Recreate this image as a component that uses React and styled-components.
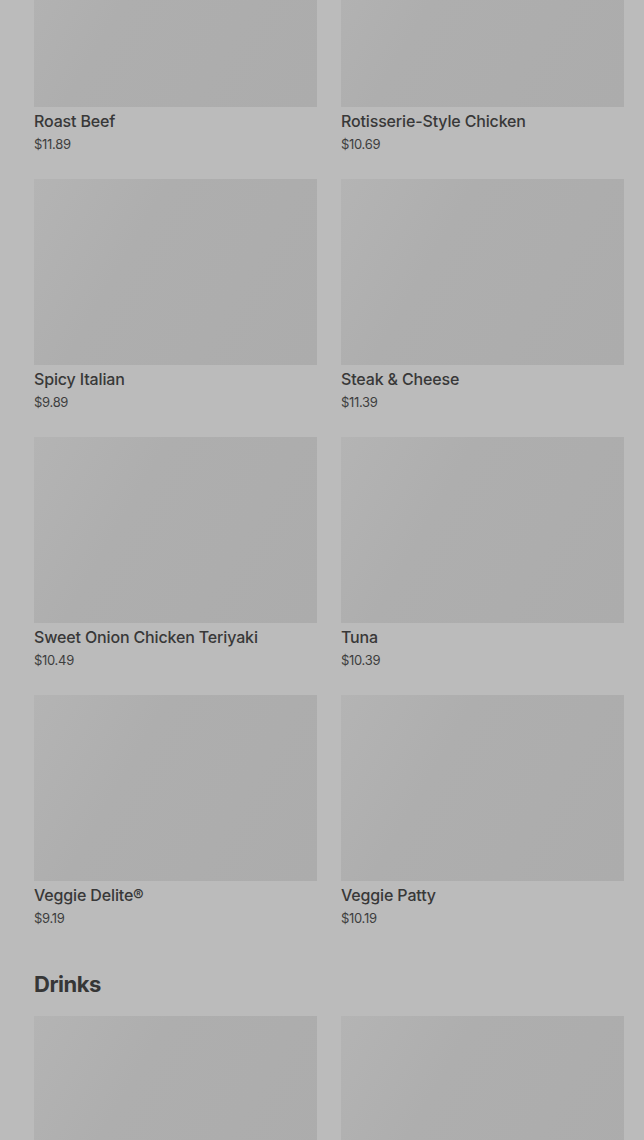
import React from 'react';
import styled, { createGlobalStyle } from 'styled-components';

const GlobalStyle = createGlobalStyle`
    html, body {
        margin: 0;
        padding: 0;
        background: #bbbbbb;
        overflow: hidden;
    }
    body {
        font-family: "Inter", "Roboto", "Liberation Sans", sans-serif;
        color: #363636;
    }
`;

const Page = styled.div`
    padding: 0 20px 0 34px;
    margin-top: -79px;
`;

const Section = styled.section`
    display: flex;
    flex-direction: column;
    & + & {
        margin-top: 43px;
    }
`;

const SectionTitle = styled.h2`
    margin: 0 0 18px;
    font-size: 22px;
    line-height: 28px;
    font-weight: 700;
    letter-spacing: -0.5px;
    color: #363636;
`;

const Grid = styled.div`
    display: grid;
    grid-template-columns: 1fr 1fr;
    column-gap: 24px;
    row-gap: 26px;
`;

const Card = styled.div`
    display: flex;
    flex-direction: column;
`;

const Thumb = styled.div`
    height: 186px;
    background: linear-gradient(120deg, #b4b4b4 0%, #aeaeae 35%, #acacac 100%);
`;

const Name = styled.div`
    margin-top: 4px;
    font-size: 16px;
    line-height: 20px;
    font-weight: 500;
    letter-spacing: -0.15px;
    color: #383838;
`;

const Price = styled.div`
    margin-top: 4px;
    font-size: 13px;
    line-height: 18px;
    color: #3e3e3e;
    letter-spacing: -0.3px;
`;

const subs = [
    { name: 'Roast Beef', price: '$11.89' },
    { name: 'Rotisserie-Style Chicken', price: '$10.69' },
    { name: 'Spicy Italian', price: '$9.89' },
    { name: 'Steak & Cheese', price: '$11.39' },
    { name: 'Sweet Onion Chicken Teriyaki', price: '$10.49' },
    { name: 'Tuna', price: '$10.39' },
    { name: 'Veggie Delite®', price: '$9.19' },
    { name: 'Veggie Patty', price: '$10.19' },
];

const drinks = [
    { name: '', price: '' },
    { name: '', price: '' },
];

function Item({ item }) {
    return (
        <Card>
            <Thumb />
            {item.name && <Name>{item.name}</Name>}
            {item.price && <Price>{item.price}</Price>}
        </Card>
    );
}

export default function App() {
    return (
        <>
            <GlobalStyle />
            <Page>
                <Section>
                    <Grid>
                        {subs.map((s) => <Item key={s.name} item={s} />)}
                    </Grid>
                </Section>
                <Section>
                    <SectionTitle>Drinks</SectionTitle>
                    <Grid>
                        {drinks.map((d, i) => <Item key={i} item={d} />)}
                    </Grid>
                </Section>
            </Page>
        </>
    );
}
